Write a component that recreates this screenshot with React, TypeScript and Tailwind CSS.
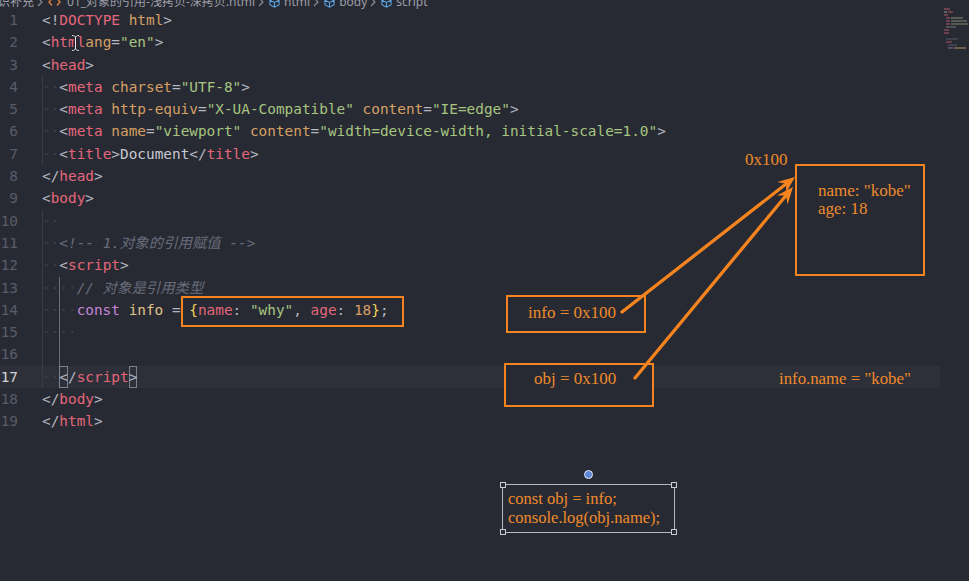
import React from "react";

type Tok = [string, string];
type Line = {
  n: number;
  indent: number;
  dots: boolean;
  g0?: boolean;
  g2?: boolean;
  cur?: boolean;
  toks: Tok[];
};

const K: Record<string, string> = {
  p: "text-[#b3b7c1]",
  tag: "text-[#e3677b]",
  attr: "text-[#d5a064]",
  str: "text-[#a6c580]",
  txt: "text-[#c5c9d1]",
  com: "text-[#676c7a] italic",
  kw: "text-[#c583d9]",
  vr: "text-[#e0c38a]",
  br: "text-[#eed45c]",
  num: "text-[#d99f69]",
  box: "text-[#b3b7c1] inline-block h-[22.3px] leading-[22.3px] shadow-[inset_0_0_0_1px_#7d818c]",
};

const lines: Line[] = [
  { n: 1, indent: 0, dots: false, toks: [["p", "<!"], ["tag", "DOCTYPE"], ["p", " "], ["attr", "html"], ["p", ">"]] },
  { n: 2, indent: 0, dots: false, toks: [["p", "<"], ["tag", "html"], ["attr", "ang"], ["p", "="], ["str", '"en"'], ["p", ">"]] },
  { n: 3, indent: 0, dots: false, toks: [["p", "<"], ["tag", "head"], ["p", ">"]] },
  { n: 4, indent: 2, dots: true, g0: true, toks: [["p", "<"], ["tag", "meta"], ["p", " "], ["attr", "charset"], ["p", "="], ["str", '"UTF-8"'], ["p", ">"]] },
  {
    n: 5, indent: 2, dots: true, g0: true,
    toks: [["p", "<"], ["tag", "meta"], ["p", " "], ["attr", "http-equiv"], ["p", "="], ["str", '"X-UA-Compatible"'], ["p", " "], ["attr", "content"], ["p", "="], ["str", '"IE=edge"'], ["p", ">"]],
  },
  {
    n: 6, indent: 2, dots: true, g0: true,
    toks: [["p", "<"], ["tag", "meta"], ["p", " "], ["attr", "name"], ["p", "="], ["str", '"viewport"'], ["p", " "], ["attr", "content"], ["p", "="], ["str", '"width=device-width, initial-scale=1.0"'], ["p", ">"]],
  },
  { n: 7, indent: 2, dots: true, g0: true, toks: [["p", "<"], ["tag", "title"], ["p", ">"], ["txt", "Document"], ["p", "</"], ["tag", "title"], ["p", ">"]] },
  { n: 8, indent: 0, dots: false, toks: [["p", "</"], ["tag", "head"], ["p", ">"]] },
  { n: 9, indent: 0, dots: false, toks: [["p", "<"], ["tag", "body"], ["p", ">"]] },
  { n: 10, indent: 2, dots: true, g0: true, toks: [] },
  { n: 11, indent: 2, dots: true, g0: true, toks: [["com", "<!-- 1.对象的引用赋值 -->"]] },
  { n: 12, indent: 2, dots: true, g0: true, toks: [["p", "<"], ["tag", "script"], ["p", ">"]] },
  { n: 13, indent: 4, dots: true, g0: true, g2: true, toks: [["com", "// 对象是引用类型"]] },
  {
    n: 14, indent: 4, dots: true, g0: true, g2: true,
    toks: [["kw", "const"], ["p", " "], ["vr", "info"], ["p", " = "], ["br", "{"], ["tag", "name"], ["p", ": "], ["str", '"why"'], ["p", ", "], ["tag", "age"], ["p", ": "], ["num", "18"], ["br", "}"], ["p", ";"]],
  },
  { n: 15, indent: 4, dots: true, g0: true, g2: true, toks: [] },
  { n: 16, indent: 4, dots: false, g0: true, g2: true, toks: [] },
  { n: 17, indent: 2, dots: true, g0: true, cur: true, toks: [["box", "<"], ["p", "/"], ["tag", "script"], ["box", ">"]] },
  { n: 18, indent: 0, dots: false, toks: [["p", "</"], ["tag", "body"], ["p", ">"]] },
  { n: 19, indent: 0, dots: false, toks: [["p", "</"], ["tag", "html"], ["p", ">"]] },
];

function Row({ l }: { l: Line }) {
  return (
    <div className={`flex h-[22.3px] w-[940px] items-center ${l.cur ? "bg-[#2e3039]" : ""}`}>
      <span className={`w-[18px] text-right ${l.cur ? "text-[#d4d4d8]" : "text-[#585c69]"}`}>{l.n}</span>
      <span className="ml-[24px] flex h-full items-center whitespace-pre">
        {Array.from({ length: l.indent }).map((_, i) => {
          let g = "";
          if (i === 0 && l.g0) g = "shadow-[inset_1px_0_0_#3a3d47]";
          if (i === 2 && l.g2) g = "shadow-[inset_1px_0_0_#696d78]";
          return (
            <span key={i} className={`inline-block h-full w-[1ch] text-center leading-[22.3px] text-[#3c3f4a] ${g}`}>
              {l.dots ? "·" : " "}
            </span>
          );
        })}
        {l.toks.map((t, i) => (
          <span key={i} className={K[t[0]]}>
            {t[1]}
          </span>
        ))}
      </span>
    </div>
  );
}

function Chevron() {
  return (
    <svg width="6" height="10" viewBox="0 0 6 10" className="mx-[3px] shrink-0">
      <path d="M1 1 L5 5 L1 9" fill="none" stroke="#8d909a" strokeWidth="1.1" />
    </svg>
  );
}

function Cube() {
  return (
    <svg width="11" height="11" viewBox="0 0 12 12" className="ml-[2px] mr-[4px] shrink-0">
      <path d="M6 1 L11 3.5 L11 8.5 L6 11 L1 8.5 L1 3.5 Z M1 3.5 L6 6 L11 3.5 M6 6 L6 11" fill="none" stroke="#5ea6e6" strokeWidth="1.1" />
    </svg>
  );
}

function arrowHead(x1: number, y1: number, x2: number, y2: number) {
  const dx = x2 - x1;
  const dy = y2 - y1;
  const L = Math.hypot(dx, dy);
  const ux = dx / L;
  const uy = dy / L;
  const px = -uy;
  const py = ux;
  const len = 17;
  const w = 7;
  const notch = 11;
  const bx = x2 - ux * len;
  const by = y2 - uy * len;
  const nx = x2 - ux * notch;
  const ny = y2 - uy * notch;
  const pts = [
    [x2, y2],
    [bx + px * w, by + py * w],
    [nx, ny],
    [bx - px * w, by - py * w],
  ]
    .map((p) => `${p[0].toFixed(1)},${p[1].toFixed(1)}`)
    .join(" ");
  return { pts, nx, ny };
}

function Arrow({ x1, y1, x2, y2 }: { x1: number; y1: number; x2: number; y2: number }) {
  const a = arrowHead(x1, y1, x2, y2);
  return (
    <g>
      <line x1={x1} y1={y1} x2={a.nx} y2={a.ny} stroke="#f5841f" strokeWidth="3.3" strokeLinecap="round" />
      <polygon points={a.pts} fill="#f5841f" />
    </g>
  );
}

export default function App() {
  return (
    <div className="relative h-[581px] w-[969px] overflow-hidden bg-[#282a33]">
      {/* breadcrumb */}
      <div className="h-[9px] overflow-hidden">
        <div className="-ml-[14px] -mt-[9px] flex h-[22px] items-center whitespace-nowrap font-['Noto_Sans','Noto_Sans_CJK_SC',sans-serif] text-[12px] text-[#9b9ea8]">
          <span>知识补充</span>
          <Chevron />
          <svg width="13" height="10" viewBox="0 0 13 10" className="ml-[2px] mr-[6px] shrink-0">
            <path d="M4 1.5 L1 5 L4 8.5 M9 1.5 L12 5 L9 8.5" fill="none" stroke="#e0823d" strokeWidth="1.3" />
          </svg>
          <span>01_对象的引用-浅拷贝-深拷贝.html</span>
          <Chevron />
          <Cube />
          <span>html</span>
          <Chevron />
          <Cube />
          <span>body</span>
          <Chevron />
          <Cube />
          <span>script</span>
        </div>
      </div>

      {/* code */}
      <div className="font-['DejaVu_Sans_Mono','Noto_Sans_CJK_SC',monospace] text-[14.4px] leading-[22.3px]">
        {lines.map((l) => (
          <Row key={l.n} l={l} />
        ))}
      </div>

      {/* minimap */}
      <div className="absolute left-[944px] top-[8px] flex w-[24px] flex-col gap-[1px] opacity-45">
        <div className="flex gap-[1px]"><div className="h-[2px] w-[6px] bg-[#c05a6e]" /></div>
        <div className="flex gap-[1px]"><div className="h-[2px] w-[3px] bg-[#a0a3ab]" /><div className="h-[2px] w-[5px] bg-[#c05a6e]" /></div>
        <div className="flex gap-[1px]"><div className="h-[2px] w-[4px] bg-[#c05a6e]" /></div>
        <div className="flex gap-[1px] pl-[2px]"><div className="h-[2px] w-[4px] bg-[#c05a6e]" /><div className="h-[2px] w-[12px] bg-[#9aa07a]" /></div>
        <div className="flex gap-[1px] pl-[2px]"><div className="h-[2px] w-[4px] bg-[#c05a6e]" /><div className="h-[2px] w-[16px] bg-[#8f947a]" /></div>
        <div className="flex gap-[1px] pl-[2px]"><div className="h-[2px] w-[4px] bg-[#c05a6e]" /><div className="h-[2px] w-[18px] bg-[#8f947a]" /></div>
        <div className="flex gap-[1px] pl-[2px]"><div className="h-[2px] w-[10px] bg-[#7f828c]" /></div>
        <div className="flex gap-[1px]"><div className="h-[2px] w-[5px] bg-[#c05a6e]" /></div>
        <div className="flex gap-[1px]"><div className="h-[2px] w-[5px] bg-[#c05a6e]" /></div>
        <div className="h-[2px]" />
        <div className="flex gap-[1px] pl-[2px]"><div className="h-[2px] w-[12px] bg-[#5a5e6a]" /></div>
        <div className="flex gap-[1px] pl-[2px]"><div className="h-[2px] w-[6px] bg-[#c05a6e]" /></div>
        <div className="flex gap-[1px] pl-[4px]"><div className="h-[2px] w-[9px] bg-[#5a5e6a]" /></div>
        <div className="flex gap-[1px] pl-[4px]"><div className="h-[2px] w-[5px] bg-[#a16fb5]" /><div className="h-[2px] w-[12px] bg-[#c0a060]" /></div>
      </div>

      {/* annotation layer */}
      <div className="pointer-events-none absolute inset-0 font-['Liberation_Serif','Times_New_Roman',serif] text-[#ef8a2b]">
        {/* mouse I-beam on line 2 */}
        <svg width="9" height="18" viewBox="0 0 9 18" className="absolute left-[71px] top-[34px]">
          <path d="M1 1.5 C3.5 1.5 4.5 2.5 4.5 4 L4.5 14 C4.5 15.5 3.5 16.5 1 16.5 M8 1.5 C5.5 1.5 4.5 2.5 4.5 4 M4.5 14 C4.5 15.5 5.5 16.5 8 16.5" fill="none" stroke="#1e1f25" strokeWidth="2.4" />
          <path d="M1 1.5 C3.5 1.5 4.5 2.5 4.5 4 L4.5 14 C4.5 15.5 3.5 16.5 1 16.5 M8 1.5 C5.5 1.5 4.5 2.5 4.5 4 M4.5 14 C4.5 15.5 5.5 16.5 8 16.5" fill="none" stroke="#e6e6ea" strokeWidth="1" />
        </svg>

        {/* highlight of the object literal */}
        <div className="absolute left-[181px] top-[296px] h-[31px] w-[223px] border-2 border-[#f5841f]" />

        {/* heap object */}
        <div className="absolute left-[745px] top-[150px] text-[17px] leading-[20px]">0x100</div>
        <div className="absolute left-[795px] top-[164px] h-[112px] w-[130px] border-2 border-[#f5841f] pl-[21px] pt-[16px] text-[17px] leading-[17.5px]">
          <div>name: "kobe"</div>
          <div>age: 18</div>
        </div>

        {/* references */}
        <div className="absolute left-[506px] top-[295px] h-[38px] w-[140px] border-2 border-[#f5841f] pl-[20px] pt-[6px] text-[17px] leading-[20px]">
          info = 0x100
        </div>
        <div className="absolute left-[504px] top-[363px] h-[44px] w-[150px] border-2 border-[#f5841f] bg-[#282a33] pl-[28px] pt-[4px] text-[17px] leading-[20px]">
          obj = 0x100
        </div>
        <div className="absolute left-[779px] top-[369px] text-[16.8px] leading-[20px]">info.name = "kobe"</div>

        <svg width="969" height="581" className="absolute left-0 top-0">
          <Arrow x1={622} y1={312} x2={795} y2={177} />
          <Arrow x1={635} y1={378} x2={793} y2={187} />
        </svg>

        {/* selected text box */}
        <div className="absolute left-[584px] top-[470px] h-[9px] w-[9px] rounded-full border border-[#dfe6f5] bg-[#5d86d8]" />
        <div className="absolute left-[502px] top-[484px] h-[49px] w-[173px] border border-[#b5b8c4] pl-[5px] pt-[4px] text-[16.5px] leading-[19px]">
          <div>const obj = info;</div>
          <div>console.log(obj.name);</div>
          <div className="absolute -left-[3px] -top-[3px] h-[6px] w-[6px] border border-[#c8cad4] bg-[#2a2c35]" />
          <div className="absolute -right-[3px] -top-[3px] h-[6px] w-[6px] border border-[#c8cad4] bg-[#2a2c35]" />
          <div className="absolute -bottom-[3px] -left-[3px] h-[6px] w-[6px] border border-[#c8cad4] bg-[#2a2c35]" />
          <div className="absolute -bottom-[3px] -right-[3px] h-[6px] w-[6px] border border-[#c8cad4] bg-[#2a2c35]" />
        </div>
      </div>
    </div>
  );
}
